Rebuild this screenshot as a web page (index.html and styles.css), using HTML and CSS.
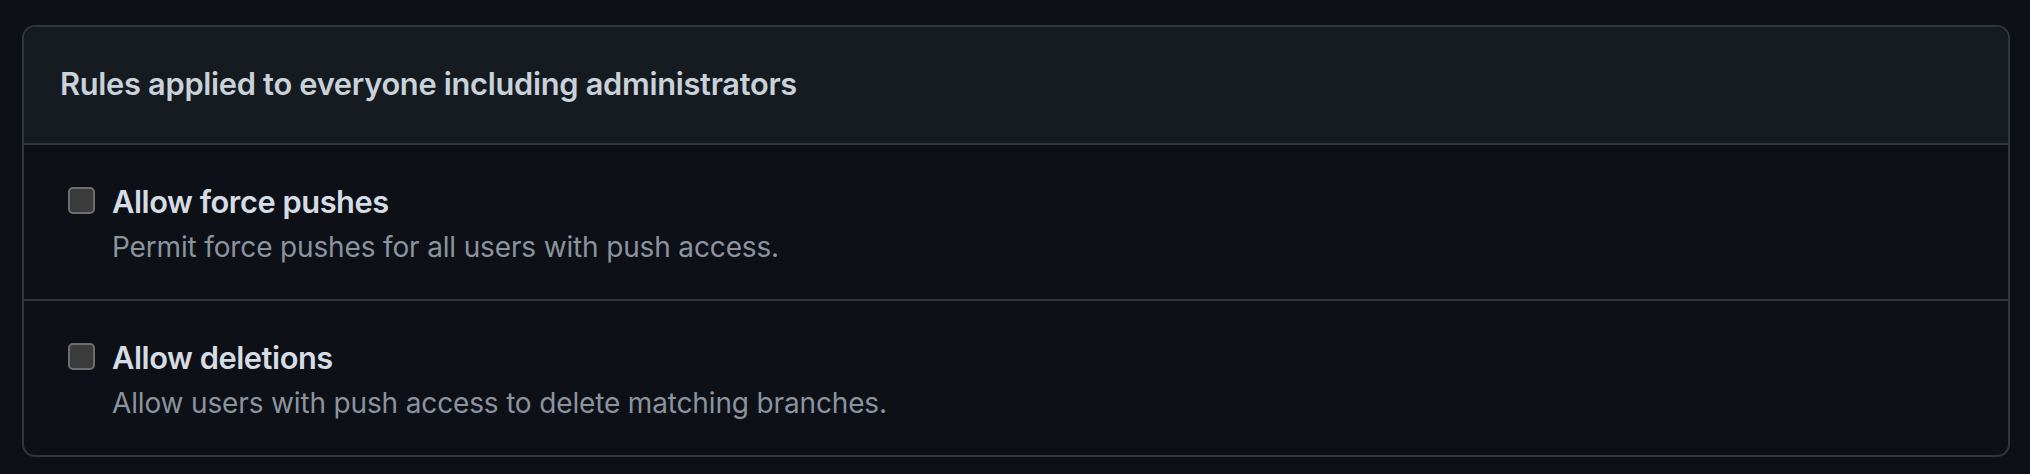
FILE: index.html
```html
<!DOCTYPE html>
<html lang="en">
<head>
<meta charset="utf-8">
<title>Branch protection rules</title>
<link rel="stylesheet" href="styles.css">
</head>
<body>
  <div class="box">
    <div class="box-header">
      <h3 class="box-title">Rules applied to everyone including administrators</h3>
    </div>
    <div class="box-row">
      <span class="checkbox"></span>
      <div class="rule">
        <div class="rule-label">Allow force pushes</div>
        <div class="rule-note">Permit force pushes for all users with push access.</div>
      </div>
    </div>
    <div class="box-row">
      <span class="checkbox"></span>
      <div class="rule">
        <div class="rule-label">Allow deletions</div>
        <div class="rule-note">Allow users with push access to delete matching branches.</div>
      </div>
    </div>
  </div>
</body>
</html>
```

FILE: styles.css
```css
html, body {
  margin: 0;
  background: #0d1117;
}

body {
  padding: 25px 20px 0 22px;
  font-family: Inter, "Noto Sans", "Liberation Sans", sans-serif;
  color: #c9d1d9;
}

.box {
  border: 2px solid #30363d;
  border-radius: 13px;
  overflow: hidden;
  background: #0d1117;
}

.box-header {
  background: #161b22;
  padding: 35px 36px 37px;
  border-bottom: 2px solid #30363d;
}

.box-title {
  margin: 0;
  font-size: 30.8px;
  line-height: 44px;
  font-weight: 600;
  letter-spacing: -0.3px;
  color: #c9d1d9;
}

.box-row {
  display: flex;
  align-items: flex-start;
  gap: 17px;
  padding: 35px 44px 29px 44px;
  border-bottom: 2px solid #30363d;
}

.box-row:last-child {
  border-bottom: none;
}

.checkbox {
  flex: none;
  width: 27px;
  height: 27px;
  box-sizing: border-box;
  margin-top: 7px;
  border: 2px solid #6e6e6e;
  border-radius: 5px;
  background: #3b3b3b;
}

.rule-label {
  font-size: 30.8px;
  line-height: 44px;
  font-weight: 600;
  letter-spacing: -0.45px;
  color: #d5dce4;
}

.rule-note {
  font-size: 28px;
  line-height: 46px;
  letter-spacing: -0.15px;
  color: #8b949e;
}
```
